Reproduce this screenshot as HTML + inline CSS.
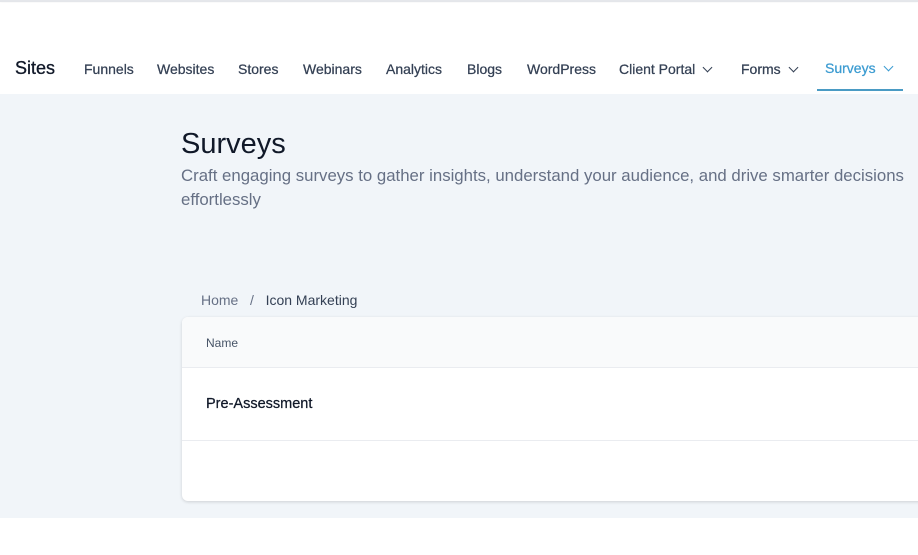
<!DOCTYPE html>
<html><head><meta charset="utf-8"><style>
*{margin:0;padding:0;box-sizing:border-box}
body{width:918px;height:555px;background:#fff;font-family:"Liberation Sans",sans-serif;position:relative;overflow:hidden}
.top{position:absolute;left:0;top:0;width:918px;height:3px;border-top:2px solid #e5e7eb}
.nav{position:absolute;left:0;top:3px;width:918px;height:91px;background:#fff;box-shadow:0 1px 3px rgba(0,0,0,.12)}
.n{position:absolute;top:58px;font-size:14px;color:#344054;white-space:nowrap;-webkit-text-stroke:0.25px #344054}
.sites{position:absolute;left:15px;top:55px;font-size:18px;color:#101828;-webkit-text-stroke:0.3px #101828}
.chev{display:inline-block;width:7px;height:7px;border-right:1.6px solid currentColor;border-bottom:1.6px solid currentColor;transform:rotate(45deg);margin-left:9px;position:relative;top:-3px}
.main{position:absolute;left:0;top:94px;width:918px;height:424px;background:#f1f5f9}
h1{position:absolute;left:181px;top:128px;font-size:29px;font-weight:400;color:#101828}
.sub{position:absolute;left:181px;top:164px;font-size:16.8px;line-height:24px;color:#667085;width:740px}
.bc{position:absolute;left:201px;top:292px;font-size:14px;color:#667085}
.bc b{font-weight:400;color:#344054}
.card{position:absolute;left:182px;top:317px;width:760px;height:184px;background:#fff;border-radius:6px;box-shadow:0 1px 3px rgba(0,0,0,.15)}
.hd{height:51px;background:#f9fafb;border-bottom:1px solid #eaecf0;border-radius:6px 6px 0 0;font-size:12px;color:#475467;padding:19px 0 0 24px}
.row{height:73px;border-bottom:1px solid #eaecf0;font-size:14.5px;color:#101828;padding:28px 0 0 24px;-webkit-text-stroke:0.25px #101828}
</style></head><body>
<div class="top"></div>
<div class="nav">
<div class="sites">Sites</div>
<div class="n" style="left:84px">Funnels</div>
<div class="n" style="left:157px">Websites</div>
<div class="n" style="left:238px">Stores</div>
<div class="n" style="left:303px">Webinars</div>
<div class="n" style="left:386px">Analytics</div>
<div class="n" style="left:467px">Blogs</div>
<div class="n" style="left:527px">WordPress</div>
<div class="n" style="left:619px">Client Portal<span class="chev"></span></div>
<div class="n" style="left:741px">Forms<span class="chev"></span></div>
<div class="n" style="left:825px;top:57px;color:#3b9bd1;-webkit-text-stroke:0.25px #3b9bd1">Surveys<span class="chev"></span></div>
<div style="position:absolute;left:817px;top:86px;width:86px;height:2px;background:#4a9bc4"></div>
</div>
<div class="main"></div>
<h1>Surveys</h1>
<div class="sub">Craft engaging surveys to gather insights, understand your audience, and drive smarter decisions effortlessly</div>
<div class="bc">Home &nbsp;&nbsp;/&nbsp;&nbsp; <b>Icon Marketing</b></div>
<div class="card">
<div class="hd">Name</div>
<div class="row">Pre-Assessment</div>
</div>
</body></html>
